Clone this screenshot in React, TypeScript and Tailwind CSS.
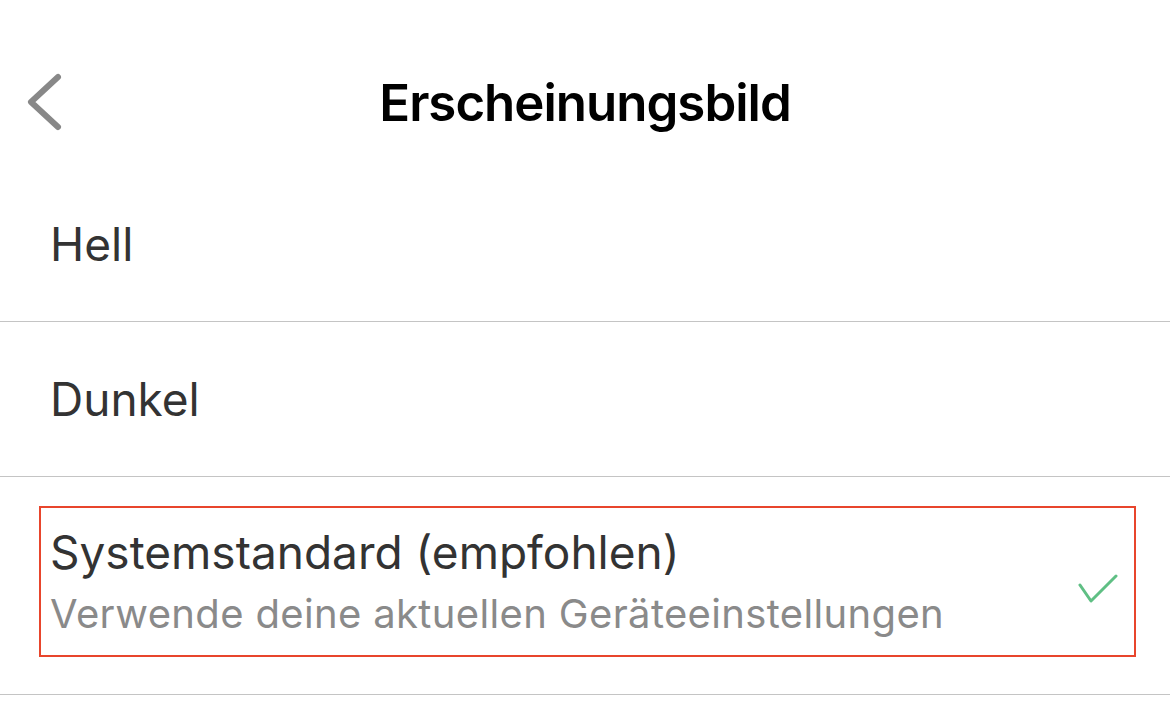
import React from "react";

export default function App() {
  return (
    <div className="w-[1170px] h-[724px] bg-white overflow-hidden font-['Inter',sans-serif]">
      {/* Header */}
      <div className="h-[167px] grid grid-cols-[1fr_auto_1fr] items-start pt-[72px]">
        <div className="pl-[24px] flex items-center h-[60px]">
          <svg width="42" height="60" viewBox="0 0 42 60" fill="none">
            <path d="M34 5 L7 30 L34 55" stroke="#888888" strokeWidth="6" strokeLinecap="round" strokeLinejoin="round" />
          </svg>
        </div>
        <div className="h-[60px] flex items-center text-[51px] font-semibold text-black leading-none tracking-[-1px]">
          Erscheinungsbild
        </div>
        <div />
      </div>

      {/* Hell */}
      <div className="h-[155px] border-b border-[#c4c4c4] flex items-center pl-[50px] text-[46px] text-[#333333] leading-none">
        Hell
      </div>

      {/* Dunkel */}
      <div className="h-[155px] border-b border-[#c4c4c4] flex items-center pl-[50px] text-[46px] text-[#333333] leading-none">
        Dunkel
      </div>

      {/* Systemstandard */}
      <div className="h-[218px] border-b border-[#c4c4c4] pt-[29px] pl-[39px]">
        <div className="w-[1097px] h-[151px] border-2 border-[#e8452c] flex items-start pl-[9px] pr-[16px] pt-[16px]">
          <div className="flex-1 flex flex-col">
            <div className="text-[46px] text-[#333333] leading-[56px]">Systemstandard (empfohlen)</div>
            <div className="mt-[9px] text-[40px] text-[#8a8a8a] leading-[50px] tracking-[0.35px]">Verwende deine aktuellen Geräteeinstellungen</div>
          </div>
          <svg width="40" height="30" viewBox="0 0 40 30" fill="none" className="mt-[50px]">
            <path d="M2 11 L13 27 L38 2" stroke="#5fbf84" strokeWidth="3" strokeLinecap="round" strokeLinejoin="round" />
          </svg>
        </div>
      </div>
    </div>
  );
}
